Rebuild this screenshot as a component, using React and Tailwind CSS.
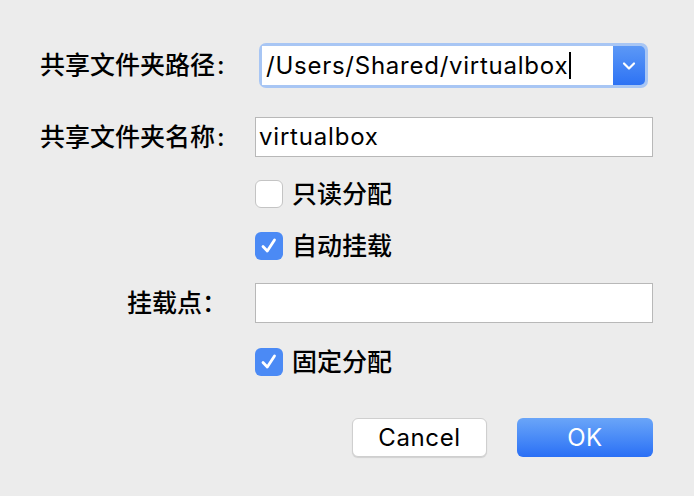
export default function App() {
  const Check = ({ checked }) =>
    checked ? (
      <div className="w-[28px] h-[28px] rounded-[6px] bg-[#4b8af5] flex items-center justify-center shrink-0">
        <svg width="20" height="20" viewBox="0 0 20 20" fill="none">
          <path d="M4 10.5 L8.3 15 L15.5 4" stroke="white" strokeWidth="2.8" strokeLinecap="round" strokeLinejoin="round" />
        </svg>
      </div>
    ) : (
      <div className="w-[28px] h-[28px] rounded-[6px] bg-white border border-[#c4c4c4] shrink-0" />
    );

  const CheckRow = ({ checked, label, className }) => (
    <div className={`flex items-center ${className}`}>
      <div className="w-[192px] shrink-0" />
      <div className="ml-[23px] flex items-center gap-[9px]">
        <Check checked={checked} />
        <span className="text-[25px] leading-none font-medium text-black">{label}</span>
      </div>
    </div>
  );

  const Label = ({ text }) => (
    <div className="w-[192px] shrink-0 flex items-center text-[25px] leading-none font-medium text-black">
      <span>{text}</span>
      <span className="ml-[2px] font-['Inter',sans-serif]">:</span>
    </div>
  );

  return (
    <div className="w-[694px] h-[496px] bg-[#ececec] pl-[40px] pr-[41px] pt-[43px] font-['Inter','Noto_Sans_CJK_SC',sans-serif] text-black">
      <div className="flex items-center">
        <Label text="共享文件夹路径" />
        <div className="ml-[27px] w-[389px] h-[45px] rounded-[7px] bg-[#a8c6f4] p-[3px] flex">
          <div className="flex-1 bg-white flex items-center pl-[4px]">
            <span className="text-[24px] leading-none tracking-[0.75px]">/Users/Shared/virtualbox</span>
            <span className="w-[2px] h-[27px] bg-black ml-[1px]" />
          </div>
          <div className="w-[32px] rounded-r-[5px] bg-gradient-to-b from-[#5c98f6] to-[#2d72f4] flex items-center justify-center">
            <svg width="14" height="10" viewBox="0 0 14 10" fill="none">
              <path d="M2 2.5 L7 7.5 L12 2.5" stroke="white" strokeWidth="2.2" strokeLinecap="round" strokeLinejoin="round" />
            </svg>
          </div>
        </div>
      </div>

      <div className="flex items-center mt-[29px]">
        <Label text="共享文件夹名称" />
        <div className="ml-[23px] flex-1 h-[40px] bg-white border border-[#b8b8b8] flex items-center pl-[3px]">
          <span className="text-[24px] leading-none tracking-[0.8px]">virtualbox</span>
        </div>
      </div>

      <CheckRow checked={false} label="只读分配" className="mt-[23px]" />
      <CheckRow checked={true} label="自动挂载" className="mt-[24px]" />

      <div className="flex items-center mt-[23px]">
        <div className="w-[192px] shrink-0 pl-[87px] text-[25px] leading-none font-medium text-black">挂载点：</div>
        <div className="ml-[23px] flex-1 h-[40px] bg-white border border-[#b8b8b8]" />
      </div>

      <CheckRow checked={true} label="固定分配" className="mt-[25px]" />

      <div className="flex justify-end gap-[30px] mt-[42px]">
        <button className="w-[135px] h-[39px] rounded-[6px] bg-white border border-[#cfcfcf] shadow-[0_1px_1px_rgba(0,0,0,0.12)] text-[24px] leading-none tracking-[0.6px] text-black">
          Cancel
        </button>
        <button className="w-[136px] h-[39px] rounded-[6px] bg-gradient-to-b from-[#6aa5f8] to-[#2a6ff5] text-[24px] leading-none tracking-[0.6px] text-white">
          OK
        </button>
      </div>
    </div>
  );
}
